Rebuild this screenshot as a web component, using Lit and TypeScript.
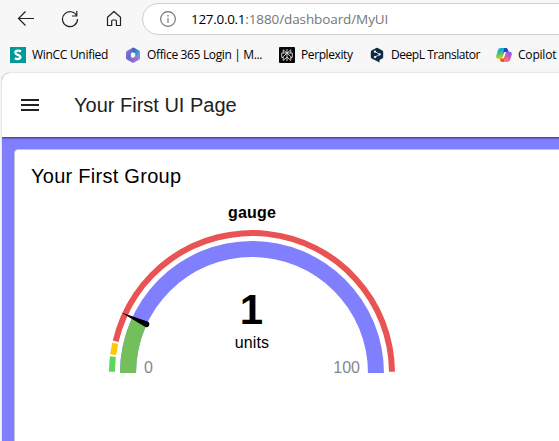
import { LitElement, html, css, svg } from "lit";
import { customElement } from "lit/decorators.js";

const CX = 143;
const CY = 143;

function point(radius: number, deg: number): string {
  const a = (deg * Math.PI) / 180;
  return `${(CX - radius * Math.cos(a)).toFixed(2)} ${(CY - radius * Math.sin(a)).toFixed(2)}`;
}

// Ring segment; angles run clockwise from the left end of the dial.
function ring(inner: number, outer: number, from: number, to: number): string {
  return `M${point(outer, from)}A${outer} ${outer} 0 0 1 ${point(outer, to)}L${point(inner, to)}A${inner} ${inner} 0 0 0 ${point(inner, from)}Z`;
}

@customElement("dial-gauge")
export class DialGauge extends LitElement {
  static styles = css`
    :host { display: grid; grid-template-columns: 286px; justify-content: start; }
    .label { text-align: center; font-size: 16px; font-weight: 700; line-height: 20px; letter-spacing: 0.15px; margin: 0 0 7px 0; }
    svg { display: block; width: 286px; height: 145px; overflow: visible; font-family: "Liberation Sans", Arial, sans-serif; }
    .value { font-size: 42px; font-weight: 700; }
    .units { font-size: 16px; letter-spacing: 0.1px; }
    .limit { font-size: 16px; fill: #888; }
  `;
  render() {
    const angle = 24.8;
    return html`
      <div class="label">gauge</div>
      <svg viewBox="0 0 286 145">
        <path d=${ring(137, 143, 0.55, 6.75)} fill="#5cd65c" />
        <path d=${ring(137, 143, 7.5, 12.2)} fill="#ffc800" />
        <path d=${ring(137, 143, 13.1, 179.5)} fill="#ea5353" />
        <path d=${ring(116, 132, 0, 180)} fill="#8080ff" />
        <path d=${ring(116, 132, 0, angle)} fill="#73bf5c" />
        <g transform="rotate(${angle} ${CX} ${CY})">
          <path d="M-1 143L26.5 140A3 3 0 1 1 26.5 146Z" fill="#000" />
        </g>
        ${svg`
          <text class="value" x="142.5" y="94" text-anchor="middle">1</text>
          <text class="units" x="143" y="118" text-anchor="middle">units</text>
          <text class="limit" x="35" y="143">0</text>
          <text class="limit" x="251" y="143" text-anchor="end">100</text>
        `}
      </svg>
    `;
  }
}

@customElement("app-root")
export class AppRoot extends LitElement {
  static styles = css`
    :host { display: block; width: 559px; height: 441px; overflow: hidden; background: #f7f7f7; font-family: "Liberation Sans", Arial, sans-serif; color: #000; }
    * { box-sizing: border-box; }
    svg { display: block; flex: none; }
    .nav { display: flex; height: 38px; padding: 3px 0 0 17px; }
    .nav > svg { margin: 7px 26px 0 0; }
    .nav > svg.home { margin-right: 19px; }
    .address { flex: none; width: 440px; height: 32px; border: 1px solid #cfcfcf; border-radius: 16px; background: #fff; display: flex; align-items: center; padding-left: 17px; font: 13.5px/20px "Open Sans", "Noto Sans", sans-serif; white-space: pre; }
    .address svg { margin-right: 15px; }
    .host { letter-spacing: -0.3px; }
    .path { color: #767676; letter-spacing: -0.1px; }
    .bookmarks { display: flex; align-items: center; height: 34px; padding-left: 10px; font: 12px/16px "Open Sans", "Noto Sans", sans-serif; white-space: nowrap; }
    .bookmark { flex: none; display: flex; align-items: center; gap: 6px; }
    .b1 { width: 115px; letter-spacing: -0.3px; }
    .b2 { width: 154px; letter-spacing: -0.35px; }
    .b3 { width: 90px; letter-spacing: -0.4px; }
    .b4 { width: 127px; letter-spacing: -0.45px; }
    .b5 { letter-spacing: -0.2px; }
    .page { margin-left: 2px; height: 369px; width: 570px; border-top-left-radius: 8px; background: #8080ff; overflow: hidden; box-shadow: 0 0 2px #bbb; margin-top: 1px; }
    .bar { height: 64px; background: #fff; display: flex; align-items: center; padding-left: 16px; gap: 32px; box-shadow: 0 1px 2px rgba(0, 0, 0, 0.6); color: #212121; }
    .title { font-size: 20px; line-height: 26px; }
    .card { margin: 12px 0 0 12px; height: 300px; background: #fff; border: 1px solid #c4c4ce; border-radius: 4px; padding: 13px 0 0 16px; }
    .heading { font-size: 20px; line-height: 26px; letter-spacing: 0.27px; }
    .gauge { padding: 14px 0 0 78px; }
  `;
  render() {
    return html`
      <div class="nav">
        <svg width="18" height="18" viewBox="0 0 18 18" fill="none" stroke="#222" stroke-width="1.2"><path d="M17 8.5H1.5M8.5 1.5L1.5 8.5L8.5 15.5" /></svg>
        <svg width="18" height="18" viewBox="0 0 18 18" fill="none" stroke="#222" stroke-width="1.2"><path d="M15.8 6A7.5 7.5 0 1 0 16.5 9M15.8 1V6H11" /></svg>
        <svg class="home" width="18" height="18" viewBox="0 0 18 18" fill="none" stroke="#222" stroke-width="1.2" stroke-linejoin="round"><path d="M2.5 15.5V7.3L9 1.5L15.5 7.3V15.5H11.4V11A1 1 0 0 0 10.4 10H7.7A1 1 0 0 0 6.7 11V15.5Z" /></svg>
        <div class="address">
          <svg width="16" height="16" viewBox="0 0 16 16" fill="none" stroke="#707070" stroke-width="1.1"><circle cx="8" cy="8" r="7.4" /><path d="M8 7V12M8 4V5.4" /></svg>
          <span class="host">127.0.0.1</span><span class="path">:1880/dashboard/MyUI</span>
        </div>
      </div>
      <div class="bookmarks">
        <div class="bookmark b1">
          <svg width="16" height="16" viewBox="0 0 16 16"><path fill="#009999" d="M0 0H16V16H0Z" /><path d="M11 4.4C8.8 3.3 5.3 3.3 5.3 5.7C5.3 8.2 10.4 7.5 10.4 10.1C10.4 12.4 7 12.4 4.8 11.3" fill="none" stroke="#fff" stroke-width="2.3" /></svg>
          <span>WinCC Unified</span>
        </div>
        <div class="bookmark b2">
          <svg width="16" height="16" viewBox="0 0 16 16"><defs><linearGradient id="o1" x2="1" y2="1"><stop stop-color="#8c83e6" /><stop offset="1" stop-color="#4054b2" /></linearGradient><linearGradient id="o2" x2="1" y2="1"><stop stop-color="#3550a8" /><stop offset="1" stop-color="#49c4f2" /></linearGradient><linearGradient id="o3" x2="1"><stop stop-color="#6f62cf" /><stop offset="1" stop-color="#a77bdd" /></linearGradient></defs>
            <path fill="url(#o1)" d="M8 .5L2.2 3.7Q1 4.4 1 5.8V11Q1 12 2.2 12.5L5.8 10.5V6.4L9 4Z" /><path fill="url(#o2)" d="M8 .5Q8.5.2 9.5 1L14 3.6Q15 4.2 15 5.5V11L10.2 9.5V6.6L7 4.8Z" /><path fill="url(#o3)" d="M15 9V11Q15 12 14 12.7L9 15.4Q8 15.9 7 15.4L2 12.6L5.6 9.8L8 11.1L10.6 9Z" /></svg>
          <span>Office 365 Login | M...</span>
        </div>
        <div class="bookmark b3">
          <svg width="16" height="16" viewBox="0 0 16 16"><rect width="16" height="16" rx="1" fill="#080808" /><path fill="none" stroke="#ddd" stroke-width=".9" d="M8 2V14M8 6L4.2 2.8V6M8 6L11.8 2.8V6M2.7 6H13.3V10.4H11.8M2.7 6V10.4H4.2M8 6L4.2 9.8V13.4L8 10.2M8 6L11.8 9.8V13.4L8 10.2" /></svg>
          <span>Perplexity</span>
        </div>
        <div class="bookmark b4">
          <svg width="16" height="16" viewBox="0 0 16 16"><path fill="#0f2b46" d="M7.2.9Q8 .4 8.8.9L13.4 3.5Q14.2 4 14.2 5V10Q14.2 11 13.4 11.4L10.5 13.1V15.6L7.2 13.7L2.6 11.4Q1.8 11 1.8 10V5Q1.8 4 2.6 3.5Z" /><path d="M6.2 4.7L10.8 7.4L6.2 10" fill="none" stroke="#fff" stroke-width=".8" /><g fill="#fff"><circle cx="6" cy="4.7" r="1.1" /><circle cx="10.7" cy="7.4" r="1.1" /><circle cx="6" cy="10.1" r="1.1" /></g></svg>
          <span>DeepL Translator</span>
        </div>
        <div class="bookmark b5">
          <svg width="16" height="16" viewBox="0 0 16 16"><defs><linearGradient id="c1" x2=".2" y2="1"><stop stop-color="#169ee4" /><stop offset=".4" stop-color="#22b7b0" /><stop offset=".75" stop-color="#89cf30" /><stop offset="1" stop-color="#ffc52b" /></linearGradient><linearGradient id="c2" x1=".7" x2=".2" y2="1"><stop stop-color="#7764ed" /><stop offset=".45" stop-color="#e154b5" /><stop offset="1" stop-color="#ff914e" /></linearGradient></defs>
            <path fill="url(#c1)" d="M4.5 1H10L6.6 11.5Q6 13 4.7 12H2.5Q-.5 12 .3 8.5L2 3Q2.7 1 4.5 1Z" /><path fill="#1747c5" d="M8 1H10.3Q11.5 1 12 3L12.6 5H9.5Q8 5 7.5 6.3Z" /><path fill="url(#c2)" d="M11.2 4.5H13.4Q16.5 4.8 15.7 8L14 13Q13.3 15 11.5 15H6L9.5 5.5Q10 4.5 11.2 4.5Z" /><path fill="#f05241" d="M3.8 11.7H6.1Q7.5 11.7 8.5 9.6L7.9 15H6Q4.8 15 4.4 13.7Z" /><path fill="#fff" d="M8.4 5.2H10L7.7 11.3H6.4Z" /></svg>
          <span>Copilot</span>
        </div>
      </div>
      <div class="page">
        <div class="bar">
          <svg width="24" height="24" viewBox="0 0 24 24" fill="#212121"><path d="M3 6H21V8H3ZM3 11H21V13H3ZM3 16H21V18H3Z" /></svg>
          <div class="title">Your First UI Page</div>
        </div>
        <div class="card">
          <div class="heading">Your First Group</div>
          <dial-gauge class="gauge"></dial-gauge>
        </div>
      </div>
    `;
  }
}
